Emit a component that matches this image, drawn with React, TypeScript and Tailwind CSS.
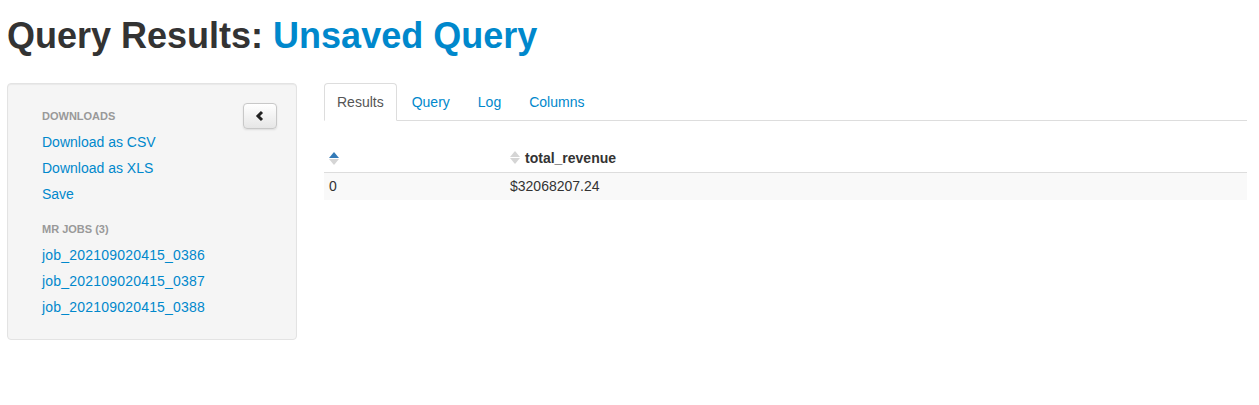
import React from 'react';

const jobs = ['job_202109020415_0386', 'job_202109020415_0387', 'job_202109020415_0388'];

function SortIcon({ active }: { active?: boolean }) {
  return (
    <svg width="10" height="14" viewBox="0 0 10 14" className="inline-block">
      <polygon points="5,0 10,6 0,6" fill={active ? '#337ab7' : '#d5d5d5'} />
      <polygon points="5,13 10,7 0,7" fill="#d5d5d5" />
    </svg>
  );
}

function Sidebar() {
  return (
    <div className="w-[290px] shrink-0 h-[257px] bg-[#f5f5f5] border border-[#e3e3e3] rounded-[4px] shadow-[inset_0_1px_1px_rgba(0,0,0,0.05)] pt-[19px] pl-[34px] pr-[19px] relative">
      <button className="absolute right-[19px] top-[19px] w-[34px] h-[26px] rounded-[4px] border border-[#c8c8c8] bg-gradient-to-b from-white to-[#e6e6e6] shadow-[0_1px_2px_rgba(0,0,0,0.1)] flex items-center justify-center">
        <svg width="10" height="12" viewBox="0 0 10 12">
          <polyline points="7,2 3,6 7,10" fill="none" stroke="#222" strokeWidth="3" />
        </svg>
      </button>
      <div className="text-[11px] font-bold uppercase text-[#999] leading-[20px] py-[3px]">Downloads</div>
      <ul>
        <li><a className="block text-[#0088cc] text-[14px] leading-[20px] py-[3px]">Download as CSV</a></li>
        <li><a className="block text-[#0088cc] text-[14px] leading-[20px] py-[3px]">Download as XLS</a></li>
        <li><a className="block text-[#0088cc] text-[14px] leading-[20px] py-[3px]">Save</a></li>
      </ul>
      <div className="mt-[9px] text-[11px] font-bold uppercase text-[#999] leading-[20px] py-[3px]">
        MR Jobs <span className="font-bold">(3)</span>
      </div>
      <ul>
        {jobs.map((j) => (
          <li key={j}><a className="block text-[#0088cc] text-[14px] leading-[20px] py-[3px] tracking-[0.2px]">{j}</a></li>
        ))}
      </ul>
    </div>
  );
}

function Results() {
  const tabs = ['Results', 'Query', 'Log', 'Columns'];
  return (
    <div className="flex-1 min-w-0">
      <ul className="flex border-b border-[#ddd] h-[38px]">
        {tabs.map((t, i) => (
          <li key={t} className="mr-[2px] -mb-px">
            <a
              className={
                i === 0
                  ? 'block px-[12px] py-[8px] leading-[20px] text-[14px] text-[#555] bg-white border border-[#ddd] border-b-white rounded-t-[4px]'
                  : 'block px-[12px] py-[8px] leading-[20px] text-[14px] text-[#0088cc] border border-transparent'
              }
            >
              {t}
            </a>
          </li>
        ))}
      </ul>
      <table className="w-full mt-[23px] text-[14px] text-[#333] border-collapse">
        <thead>
          <tr className="border-b border-[#ddd]">
            <th className="w-[181px] h-[28px] text-left font-bold px-[5px] py-0 leading-[20px] align-middle">
              <SortIcon active />
            </th>
            <th className="h-[28px] text-left font-bold px-[5px] py-0 leading-[20px] align-middle">
              <span className="flex items-center gap-[5px]">
                <SortIcon />
                total_revenue
              </span>
            </th>
          </tr>
        </thead>
        <tbody>
          <tr className="bg-[#f9f9f9]">
            <td className="h-[28px] px-[5px] py-0 leading-[20px]">0</td>
            <td className="h-[28px] px-[5px] py-0 leading-[20px]">$32068207.24</td>
          </tr>
        </tbody>
      </table>
    </div>
  );
}

export default function App() {
  return (
    <div className="w-[1259px] h-[405px] bg-white text-[#333] font-['Liberation_Sans',Arial,sans-serif]">
      <h1 className="pl-[7px] pt-[16px] text-[36px] leading-[40px] font-bold text-[#333]">
        Query Results: <span className="text-[#0088cc]">Unsaved Query</span>
      </h1>
      <div className="flex gap-[27px] pl-[7px] pr-[12px] mt-[27px]">
        <Sidebar />
        <Results />
      </div>
    </div>
  );
}
